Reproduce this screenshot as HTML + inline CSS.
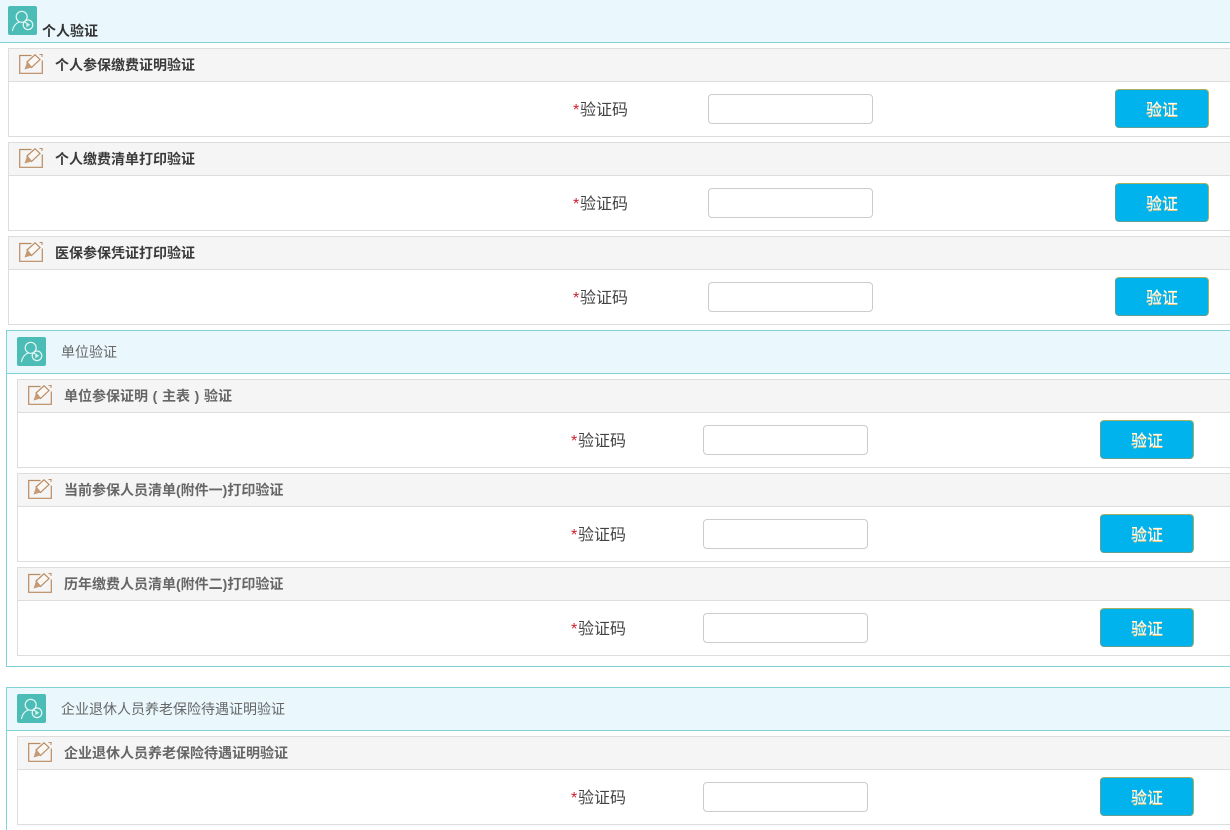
<!DOCTYPE html>
<html lang="zh"><head><meta charset="utf-8"><title>验证</title>
<style>
html,body{margin:0;padding:0;background:#fff;width:1230px;height:830px;overflow:hidden}
body{font-family:"Liberation Sans","Noto Sans CJK SC",sans-serif;color:#333}
#w{position:absolute;left:0;top:0;width:1230px;height:830px;overflow:hidden}
div,svg{position:absolute;box-sizing:border-box}
.sec{border:1px solid #80d2d8;border-right:0;left:6px;width:1224px}
.shead{background:#eaf8fe;border-bottom:1px solid #80d2d8;left:0;top:0;width:100%;height:43px}
.stitle{font-size:14px;line-height:20px;color:#666;white-space:nowrap}
.panel{border:1px solid #ddd;border-right:0;background:#fff;height:89px}
.phead{left:0;top:0;width:100%;height:33px;background:#f5f5f5;border-bottom:1px solid #ddd}
.ptitle{font-size:14px;font-weight:bold;line-height:20px;white-space:nowrap;top:6px;left:46px;color:#666}
.ptitle b{display:inline-block;width:14px;text-align:center;font-family:"Liberation Sans",sans-serif}
.dark{color:#3a3a3a}
.lab{font-size:16px;line-height:22px;white-space:nowrap;color:#444}
.lab i{font-style:normal;color:#d0202a;display:inline-block;width:7px}
.inp{width:165px;height:30px;border:1px solid #ccc;border-radius:4px;background:#fff}
.btn{width:94px;height:39px;border:1px solid #5f9f98;border-top-color:#a8b060;border-right-color:#a8b060;border-radius:4px;background:#00b3ec;color:#fff;font-size:16px;line-height:42px;text-align:center;text-shadow:0 1px 0 #e8c878;overflow:hidden}
</style></head><body><div id="w">

<svg width="0" height="0" style="position:absolute"><defs>
<symbol id="u" viewBox="0 0 29 29"><rect width="29" height="29" rx="2" fill="#4cbdb6"/>
<circle cx="13.700" cy="10.800" r="5.500" fill="none" stroke="#e6f7f5" stroke-width="1.200"/>
<path d="M4.500 24.500C5.500 20 8 17.300 11 16M16.500 15.800c.6.300 1.100.6 1.600 1" fill="none" stroke="#e6f7f5" stroke-width="1.200" stroke-linecap="round"/>
<circle cx="20" cy="18.800" r="4.800" fill="none" stroke="#e6f7f5" stroke-width="1.200"/><path d="M18.300 16.300v5l4-2.500z" fill="#d5f1ee"/></symbol>
<symbol id="e" viewBox="0 0 24 20"><path d="M12.500 1.500H.7v17.800h22.600V6.500" fill="none" stroke="#b98b62" stroke-width="1.200"/>
<path d="M8 8L16 .8l5 4.700-8.500 8z" fill="#fbf7f2" stroke="#b98b62" stroke-width="1.200"/><path d="M5.500 15.500L8 8l4.500 5.500z" fill="#c59a76"/><path d="M20.500 .6l2.700-.3-.3 2.700" fill="none" stroke="#b98b62" stroke-width="1"/></symbol>
</defs></svg>

<!-- section 1 -->
<div style="left:0;top:0;width:1230px;height:43px;background:#eaf8fe;border-bottom:1px solid #80d2d8"></div>
<svg style="left:8px;top:6px" width="29" height="29"><use href="#u"/></svg>
<div class="stitle" style="left:42px;top:21px;color:#333;font-weight:bold">个人验证</div>

<div class="panel" style="left:8px;top:48px;width:1222px"><div class="phead"></div><svg style="left:10px;top:5px" width="24" height="20"><use href="#e"/></svg><div class="ptitle dark">个人参保缴费证明验证</div></div>
<div class="lab" style="left:573px;top:100px"><i>*</i>验证码</div><div class="inp" style="left:708px;top:94px"></div><div class="btn" style="left:1115px;top:89px">验证</div>

<div class="panel" style="left:8px;top:142px;width:1222px"><div class="phead"></div><svg style="left:10px;top:5px" width="24" height="20"><use href="#e"/></svg><div class="ptitle dark">个人缴费清单打印验证</div></div>
<div class="lab" style="left:573px;top:194px"><i>*</i>验证码</div><div class="inp" style="left:708px;top:188px"></div><div class="btn" style="left:1115px;top:183px">验证</div>

<div class="panel" style="left:8px;top:236px;width:1222px"><div class="phead"></div><svg style="left:10px;top:5px" width="24" height="20"><use href="#e"/></svg><div class="ptitle dark">医保参保凭证打印验证</div></div>
<div class="lab" style="left:573px;top:288px"><i>*</i>验证码</div><div class="inp" style="left:708px;top:282px"></div><div class="btn" style="left:1115px;top:277px">验证</div>

<!-- section 2 -->
<div class="sec" style="top:330px;height:337px"><div class="shead"></div></div>
<svg style="left:17px;top:337px" width="29" height="29"><use href="#u"/></svg>
<div class="stitle" style="left:61px;top:342px">单位验证</div>

<div class="panel" style="left:17px;top:379px;width:1213px"><div class="phead"></div><svg style="left:10px;top:5px" width="24" height="20"><use href="#e"/></svg><div class="ptitle">单位参保证明<b>(</b>主表<b>)</b>验证</div></div>
<div class="lab" style="left:571px;top:431px"><i>*</i>验证码</div><div class="inp" style="left:703px;top:425px"></div><div class="btn" style="left:1100px;top:420px">验证</div>

<div class="panel" style="left:17px;top:473px;width:1213px"><div class="phead"></div><svg style="left:10px;top:5px" width="24" height="20"><use href="#e"/></svg><div class="ptitle">当前参保人员清单(附件一)打印验证</div></div>
<div class="lab" style="left:571px;top:525px"><i>*</i>验证码</div><div class="inp" style="left:703px;top:519px"></div><div class="btn" style="left:1100px;top:514px">验证</div>

<div class="panel" style="left:17px;top:567px;width:1213px"><div class="phead"></div><svg style="left:10px;top:5px" width="24" height="20"><use href="#e"/></svg><div class="ptitle">历年缴费人员清单(附件二)打印验证</div></div>
<div class="lab" style="left:571px;top:619px"><i>*</i>验证码</div><div class="inp" style="left:703px;top:613px"></div><div class="btn" style="left:1100px;top:608px">验证</div>

<!-- section 3 -->
<div class="sec" style="top:687px;height:143px;border-bottom:0"><div class="shead"></div></div>
<svg style="left:17px;top:694px" width="29" height="29"><use href="#u"/></svg>
<div class="stitle" style="left:61px;top:699px">企业退休人员养老保险待遇证明验证</div>

<div class="panel" style="left:17px;top:736px;width:1213px"><div class="phead"></div><svg style="left:10px;top:5px" width="24" height="20"><use href="#e"/></svg><div class="ptitle">企业退休人员养老保险待遇证明验证</div></div>
<div class="lab" style="left:571px;top:788px"><i>*</i>验证码</div><div class="inp" style="left:703px;top:782px"></div><div class="btn" style="left:1100px;top:777px">验证</div>

</div></body></html>
